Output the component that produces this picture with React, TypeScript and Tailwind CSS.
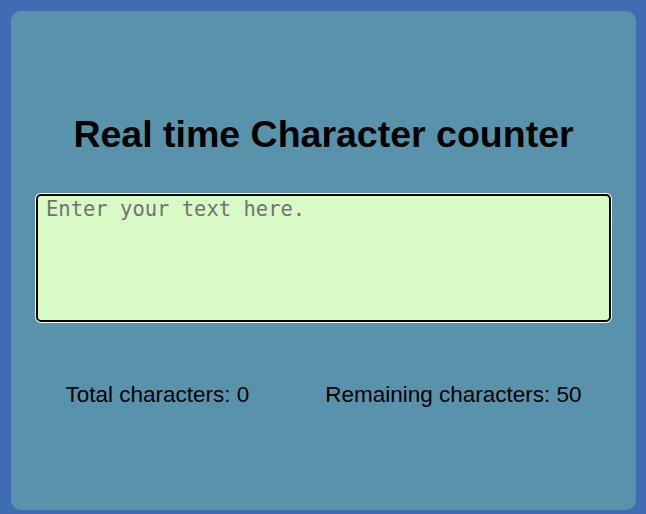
import { useState } from 'react';

const LIMIT = 50;

export default function App() {
  const [text, setText] = useState('');

  return (
    <div className="w-[646px] h-[514px] bg-[#3f6cb3] pt-[11px] pl-[11px] overflow-hidden" style={{ fontFamily: '"Liberation Sans", Arial, sans-serif' }}>
      <div className="w-[625px] h-[499px] bg-[#5992ab] rounded-[10px] flex flex-col items-center">
        <h1 className="mt-[101px] text-[37.5px] leading-[44px] font-bold text-black">
          Real time Character counter
        </h1>

        <textarea
          value={text}
          maxLength={LIMIT}
          onChange={(e) => setText(e.target.value)}
          placeholder="Enter your text here."
          className="mt-[38px] w-[575px] h-[128px] bg-[#d8fbc6] border-2 border-black rounded-[5px] shadow-[0_0_0_1px_#ffffff] px-[8px] pt-[1px] pb-[3px] text-[20.5px] leading-[24px] text-black placeholder:text-[#727272] resize-none outline-none"
          style={{ fontFamily: '"DejaVu Sans Mono", "Liberation Mono", monospace' }}
        />

        <div className="mt-[60px] flex gap-[76px] text-[22.5px] leading-[26px] text-black">
          <p>Total characters: {text.length}</p>
          <p>Remaining characters: {LIMIT - text.length}</p>
        </div>
      </div>
    </div>
  );
}
